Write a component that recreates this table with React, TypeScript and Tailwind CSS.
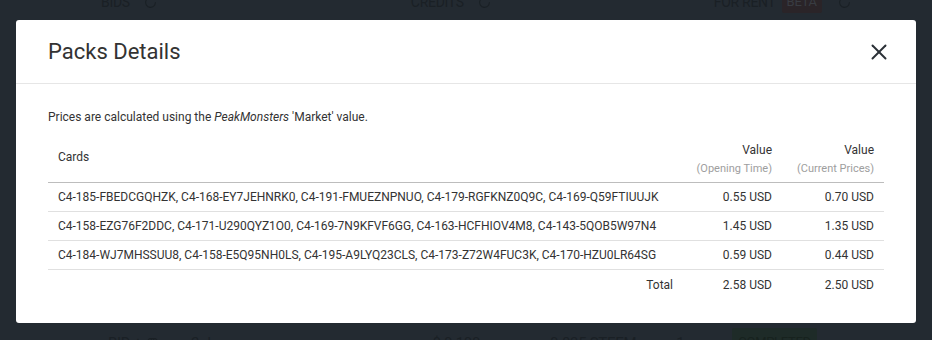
import React from 'react';
import { X, LoaderCircle, Gem } from 'lucide-react';

const packs = [
  {
    id: 1,
    cards: 'C4-185-FBEDCGQHZK, C4-168-EY7JEHNRK0, C4-191-FMUEZNPNUO, C4-179-RGFKNZ0Q9C, C4-169-Q59FTIUUJK',
    opening: '0.55 USD',
    current: '0.70 USD',
  },
  {
    id: 2,
    cards: 'C4-158-EZG76F2DDC, C4-171-U290QYZ1O0, C4-169-7N9KFVF6GG, C4-163-HCFHIOV4M8, C4-143-5QOB5W97N4',
    opening: '1.45 USD',
    current: '1.35 USD',
  },
  {
    id: 3,
    cards: 'C4-184-WJ7MHSSUU8, C4-158-E5Q95NH0LS, C4-195-A9LYQ23CLS, C4-173-Z72W4FUC3K, C4-170-HZU0LR64SG',
    opening: '0.59 USD',
    current: '0.44 USD',
  },
];

const PacksDetailsModal: React.FC = () => {
  return (
    <div className="absolute left-[16px] top-[20px] w-[900px] rounded-[3px] bg-white text-[#333]">
      {/* Header */}
      <div className="flex h-[64px] items-center justify-between border-b border-[#e6e6e6] pl-[32px] pr-[24px]">
        <h2 className="text-[22px] font-normal leading-none text-[#333]">Packs Details</h2>
        <button className="text-[#2b3137]">
          <X size={26} strokeWidth={1.8} />
        </button>
      </div>

      {/* Body */}
      <div className="px-[32px] pb-[24px] pt-[26px]">
        <p className="text-[12px] leading-[14px]">
          Prices are calculated using the <i>PeakMonsters</i> 'Market' value.
        </p>

        <div className="mt-[8px] text-[12px]">
          {/* Table header */}
          <div className="grid grid-cols-[635px_99px_102px] border-b border-[#bdbdbd]">
            <div className="flex items-center pl-[10px]">Cards</div>
            <div className="pb-[4px] pr-[10px] pt-[9px] text-right">
              <div className="leading-[18px]">Value</div>
              <div className="text-[11px] leading-[19px] text-[#9e9e9e]">(Opening Time)</div>
            </div>
            <div className="pb-[4px] pr-[10px] pt-[9px] text-right">
              <div className="leading-[18px]">Value</div>
              <div className="text-[11px] leading-[19px] text-[#9e9e9e]">(Current Prices)</div>
            </div>
          </div>

          {/* Rows */}
          {packs.map((pack) => (
            <div
              key={pack.id}
              className="grid h-[29px] grid-cols-[635px_99px_102px] items-center border-b border-[#e0e0e0]"
            >
              <div className="whitespace-nowrap pl-[10px]">{pack.cards}</div>
              <div className="pr-[10px] text-right">{pack.opening}</div>
              <div className="pr-[10px] text-right">{pack.current}</div>
            </div>
          ))}

          {/* Total */}
          <div className="grid h-[29px] grid-cols-[635px_99px_102px] items-center">
            <div className="pr-[10px] text-right">Total</div>
            <div className="pr-[10px] text-right">2.58 USD</div>
            <div className="pr-[10px] text-right">2.50 USD</div>
          </div>
        </div>
      </div>
    </div>
  );
};

export default function App() {
  return (
    <div
      className="relative h-[340px] w-[932px] overflow-hidden bg-[#232a31]"
      style={{ fontFamily: 'Roboto, "Liberation Sans", sans-serif' }}
    >
      {/* Page behind the backdrop */}
      <div className="flex h-[20px] -translate-y-[8px] items-center text-[14px] uppercase tracking-[-0.3px] text-[#1a2025]">
        <span className="ml-[101px]">Bids</span>
        <LoaderCircle className="ml-[14px]" size={13} strokeWidth={2} />
        <span className="ml-[254px]">Credits</span>
        <LoaderCircle className="ml-[14px]" size={13} strokeWidth={2} />
        <span className="ml-[223px]">For rent</span>
        <span className="ml-[6px] flex h-[22px] items-center rounded-[2px] bg-[#2a2428] px-[5px] text-[13px] text-[#383c42]">
          Beta
        </span>
        <LoaderCircle className="ml-[16px]" size={13} strokeWidth={2} />
      </div>

      <div className="absolute left-0 top-[328px] flex w-full items-start text-[15px] tracking-[-0.3px] text-[#1a2025]">
        <span className="ml-[108px] mt-[4px] flex items-center gap-[4px]">
          BID + <Gem size={13} strokeWidth={2} />
        </span>
        <span className="ml-[32px] mt-[4px]">2 days ago</span>
        <span className="ml-[172px] mt-[4px]">$ 0.100</span>
        <span className="ml-[70px] mt-[4px]">0.835 STEEM</span>
        <span className="ml-[40px] mt-[4px]">1</span>
        <span className="ml-[48px] h-[22px] rounded-[2px] bg-[#1e2b28] px-[6px] pt-[4px] text-[13px] text-[#17221e]">
          COMPLETED
        </span>
      </div>

      <PacksDetailsModal />
    </div>
  );
}
